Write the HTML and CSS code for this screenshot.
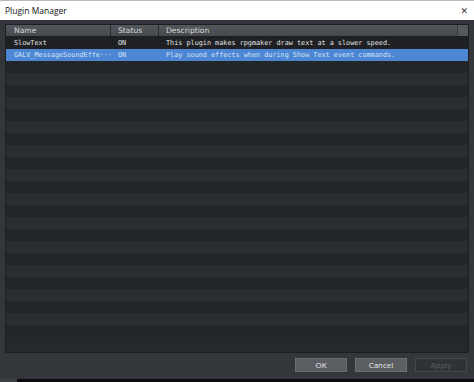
FILE: index.html
```html
<!DOCTYPE html>
<html>
<head>
<meta charset="utf-8">
<link rel="stylesheet" href="styles.css">
</head>
<body>
<div class="window">
  <div class="titlebar">
    <span class="title">Plugin Manager</span>
    <span class="close">✕</span>
  </div>
  <div class="body">
    <div class="frame">
      <div class="header">
        <div class="hcell c-name">Name</div>
        <div class="hcell c-status">Status</div>
        <div class="hcell c-desc">Description</div>
        <div class="corner"></div>
      </div>
      <div class="rows">
        <div class="row first">
          <div class="cell c-name">SlowText</div>
          <div class="cell c-status">ON</div>
          <div class="cell c-desc">This plugin makes rpgmaker draw text at a slower speed.</div>
        </div>
        <div class="row selected">
          <div class="cell c-name">GALV_MessageSoundEffe···</div>
          <div class="cell c-status">ON</div>
          <div class="cell c-desc">Play sound effects when during Show Text event commands.</div>
        </div>
        <div class="row"></div><div class="row"></div><div class="row"></div><div class="row"></div>
        <div class="row"></div><div class="row"></div><div class="row"></div><div class="row"></div>
        <div class="row"></div><div class="row"></div><div class="row"></div><div class="row"></div>
        <div class="row"></div><div class="row"></div><div class="row"></div><div class="row"></div>
        <div class="row"></div><div class="row"></div><div class="row"></div><div class="row"></div>
        <div class="row"></div><div class="row"></div><div class="row"></div>
      </div>
    </div>
    <div class="buttons">
      <button class="btn">OK</button>
      <button class="btn">Cancel</button>
      <button class="btn disabled">Apply</button>
    </div>
  </div>
  <div class="strip"><div class="strip-left"></div></div>
</div>
</body>
</html>
```

FILE: styles.css
```css
* { box-sizing: border-box; }
html, body { margin: 0; padding: 0; }
body { width: 474px; height: 382px; overflow: hidden; background: #000; }
.window { width: 474px; height: 382px; display: flex; flex-direction: column; }
.titlebar {
  height: 20px; background: #fff; border-top: 1px solid #b9b9b9;
  display: flex; align-items: center; justify-content: space-between;
  padding: 0 6px 0 5px;
  font-family: "Open Sans", "Noto Sans", sans-serif; font-size: 8.5px; color: #111;
}
.close { font-family: "DejaVu Sans", sans-serif; font-size: 9px; color: #333; }
.body {
  flex: 1; background: #33363a; display: flex; flex-direction: column;
  padding: 4px 5px 0 5px; min-height: 0;
}
.frame {
  height: 330px; border: 1px solid #1c1e20; background: #26292c;
  display: flex; flex-direction: column; overflow: hidden;
}
.header {
  height: 12px; display: flex; background: linear-gradient(#53575b, #46494d);
  font-family: "DejaVu Sans", sans-serif; font-size: 7.6px; color: #d5d8da;
  border-bottom: 1px solid #1c1e20; flex: none;
}
.hcell { line-height: 11px; padding-left: 7px; white-space: nowrap; }
.header .c-name { width: 104px; padding-left: 8px; }
.header .c-status { width: 48px; border-left: 1px solid #2a2c2f; }
.header .c-desc { flex: 1; border-left: 1px solid #2a2c2f; }
.corner { width: 11px; background: #54585c; border-left: 1px solid #3a3d40; }
.rows { flex: 1; overflow: hidden; }
.row { height: 12px; display: flex; background: #2b2e31; }
.row:nth-child(odd) { background: #232629; }
.row.first { background: #1e2023; }
.row.selected { background: #4d87d4; }
.cell {
  font-family: "DejaVu Sans Mono", monospace; font-size: 6.8px; line-height: 12px;
  color: #e2e2e2; white-space: nowrap;
}
.row.selected .cell { color: #d4e3f8; }
.row .c-name { width: 104px; padding-left: 8px; flex: none; }
.row .c-status { width: 48px; padding-left: 8px; flex: none; }
.row .c-desc { flex: 1; padding-left: 8px; }
.buttons {
  display: flex; justify-content: flex-end; gap: 8px;
  padding: 5px 2px 0 0; height: 26px;
}
.btn {
  width: 52px; height: 14px; padding: 0; margin: 0;
  background: #5b5f63; border: 1px solid #6a6e72; color: #e8e8e8;
  font-family: "Open Sans", "Noto Sans", sans-serif; font-size: 8px; line-height: 12px;
}
.btn.disabled { background: #303336; border-color: #45484b; color: #5a5e62; }
.strip { height: 3px; background: #0b0b0c; display: flex; }
.strip-left { width: 17px; background: #3c3f42; }
```
